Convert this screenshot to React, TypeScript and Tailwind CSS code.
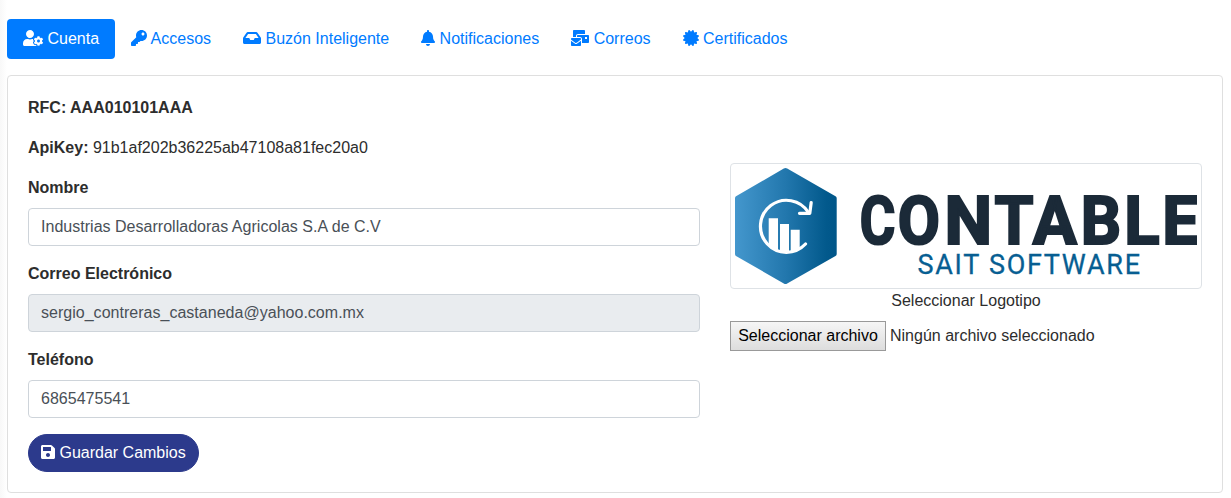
import React from 'react';
import type { IconType } from 'react-icons';
import { FaBell, FaCertificate, FaInbox, FaKey, FaMailBulk, FaSave, FaUserCog } from 'react-icons/fa';

type TabItem = { label: string; icon: IconType; size: string; active?: boolean };

const tabs: TabItem[] = [
  { label: 'Cuenta', icon: FaUserCog, size: 'w-5', active: true },
  { label: 'Accesos', icon: FaKey, size: 'w-4' },
  { label: 'Buzón Inteligente', icon: FaInbox, size: 'w-[18px]' },
  { label: 'Notificaciones', icon: FaBell, size: 'w-3.5' },
  { label: 'Correos', icon: FaMailBulk, size: 'w-[18px]' },
  { label: 'Certificados', icon: FaCertificate, size: 'w-4' },
];

function Tab({ label, icon: Icon, size, active }: TabItem) {
  return (
    <a
      className={
        active
          ? 'block whitespace-pre rounded bg-[#007bff] px-4 py-2 text-white'
          : 'block whitespace-pre rounded px-4 py-2 text-[#007bff]'
      }
    >
      <Icon className={`inline-block h-4 align-[-2px] ${size}`} />
      {' ' + label}
    </a>
  );
}

function Field({ label, value, disabled }: { label: string; value: string; disabled?: boolean }) {
  return (
    <div className="mb-4">
      <label className="mb-2 block font-bold">{label}</label>
      <input
        type="text"
        defaultValue={value}
        disabled={disabled}
        className="block h-[38px] w-full rounded border border-[#ced4da] bg-white px-3 py-1.5 tracking-[0.02px] text-[#495057] disabled:bg-[#e9ecef]"
      />
    </div>
  );
}

const wordmark = [
  { char: 'C', x: 124.8, width: 35.6 },
  { char: 'O', x: 162.8, width: 42.2 },
  { char: 'N', x: 209.6, width: 47.6 },
  { char: 'T', x: 259.6, width: 39 },
  { char: 'A', x: 297.8, width: 44 },
  { char: 'B', x: 345.8, width: 40.4 },
  { char: 'L', x: 389.3, width: 35.3 },
  { char: 'E', x: 427.3, width: 36.8 },
];

function Logo() {
  return (
    <svg viewBox="0 0 462 116" className="block h-[116px] w-[462px] overflow-hidden">
      <defs>
        <linearGradient id="hexagon" x1="0" x2="1" y1="0" y2="0">
          <stop offset="0" stopColor="#4497cd" />
          <stop offset="0.5" stopColor="#2277ad" />
          <stop offset="0.9" stopColor="#02598c" />
          <stop offset="1" stopColor="#005689" />
        </linearGradient>
      </defs>
      <path
        d="M48.8.5q1.7-1 3.4 0L100.5 28.2q1.2.7 1.2 2V86q0 1.300-1.200 2L52.200 115.500q-1.700 1-3.400 0L1 88q-1-.7-1-2V30.200q0-1.300 1-2z"
        fill="url(#hexagon)"
      />
      <g fill="none" stroke="#fff" strokeWidth="3.200" strokeLinecap="round" strokeLinejoin="round">
        <path d="M70.500 76A26 26 0 1 1 73.500 44.500" />
        <path d="M76.200 34.500L74.800 45.300H64.500" />
      </g>
      <path
        d="M33.700 50.300h9.300V83l-9.300-5.500zM45 56h9v28h-9zM55.700 61.700h9V81l-9 3z"
        fill="#fff"
      />
      <text
        y="75.500"
        fill="#1b2a38"
        stroke="#1b2a38"
        strokeWidth="2.200"
        className="font-['Roboto'] text-[67px] font-bold"
      >
        {wordmark.map(({ char, x, width }) => (
          <tspan key={char} x={x} textLength={width} lengthAdjust="spacingAndGlyphs">
            {char}
          </tspan>
        ))}
      </text>
      <text
        x="182.500"
        y="105.500"
        textLength="222.500"
        fill="#075e92"
        stroke="#075e92"
        strokeWidth="0.300"
        className="font-['Roboto'] text-[27px]"
      >
        SAIT SOFTWARE
      </text>
    </svg>
  );
}

export default function App() {
  return (
    <div className="h-[498px] overflow-hidden bg-[linear-gradient(to_right,#f8f8f8,#ffffff_7px)] pt-[19px] pr-2 pl-[7px] font-['Liberation_Sans',Arial,sans-serif] text-base text-[#2d2d2d]">
      <nav className="mb-4 flex">
        {tabs.map((tab) => (
          <Tab key={tab.label} {...tab} />
        ))}
      </nav>
      <main className="flex h-[418px] justify-between rounded border border-[#dfdfdf] bg-white p-5">
        <form className="w-[672px]">
          <p className="mb-4 font-bold">RFC: AAA010101AAA</p>
          <p className="mb-4">
            <b>ApiKey:</b> 91b1af202b36225ab47108a81fec20a0
          </p>
          <Field label="Nombre" value="Industrias Desarrolladoras Agricolas S.A de C.V" />
          <Field label="Correo Electrónico" value="sergio_contreras_castaneda@yahoo.com.mx" disabled />
          <Field label="Teléfono" value="6865475541" />
          <button
            type="button"
            className="block h-[38px] whitespace-pre rounded-full border border-[#2c3a8c] bg-[#2c3a8c] px-3 text-white"
          >
            <FaSave className="inline-block h-4 w-3.5 align-[-2px]" />
            {' Guardar Cambios'}
          </button>
        </form>
        <section className="w-[472px] pt-[67px]">
          <div className="h-[126px] rounded border border-[#dee2e6] bg-white p-1">
            <Logo />
          </div>
          <p className="mb-2 text-center">Seleccionar Logotipo</p>
          <div className="flex items-center gap-1">
            <button
              type="button"
              className="h-[30px] w-[156px] whitespace-nowrap border border-[#999999] bg-linear-to-b from-[#f6f6f6] to-[#dddddd] text-black"
            >
              Seleccionar archivo
            </button>
            <span>Ningún archivo seleccionado</span>
          </div>
        </section>
      </main>
    </div>
  );
}
